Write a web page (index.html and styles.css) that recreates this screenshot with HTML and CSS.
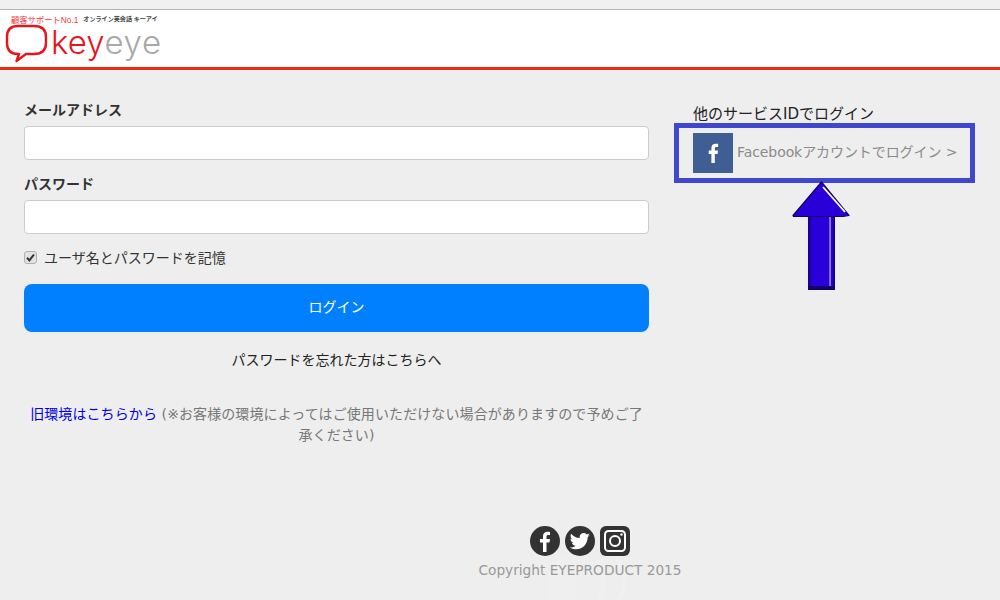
FILE: index.html
```html
<!DOCTYPE html>
<html lang="ja">
<head>
<meta charset="utf-8">
<title>Okeyeye ログイン</title>
<link rel="stylesheet" href="styles.css">
</head>
<body>
<div class="topstrip"></div>
<header class="header">
  <div class="logo">
    <div class="tagline"><span class="tag-red">顧客サポートNo.1</span><span class="tag-dark">オンライン英会話 キーアイ</span></div>
    <div class="wordmark">
      <svg class="bubble" width="44" height="40" viewBox="0 0 44 40" aria-hidden="true">
        <path d="M13 2H29C37 2 41 6 41 13V19C41 26 37 30 29 30H21L11.500 37L14 30H13C5.500 30 2 26 2 19V13C2 6 5.500 2 13 2Z" fill="none" stroke="#e8141c" stroke-width="2.400" stroke-linejoin="round"/>
      </svg>
      <span class="w-red">key</span><span class="w-gray">eye</span>
    </div>
  </div>
</header>
<main class="main">
  <section class="form">
    <label class="label">メールアドレス</label>
    <div class="input"></div>
    <label class="label">パスワード</label>
    <div class="input"></div>
    <div class="remember">
      <span class="check"><svg width="9" height="9" viewBox="0 0 9 9" aria-hidden="true"><path d="M1 4.800L3.400 7.400L8 1.500" fill="none" stroke="#333" stroke-width="2"/></svg></span>
      <span>ユーザ名とパスワードを記憶</span>
    </div>
    <div class="login">ログイン</div>
    <div class="forgot">パスワードを忘れた方はこちらへ</div>
    <p class="legacy"><span class="link">旧環境はこちらから</span> (※お客様の環境によってはご使用いただけない場合がありますので予めご了承ください)</p>
  </section>
  <aside class="side">
    <div class="side-title">他のサービスIDでログイン</div>
    <div class="fb-row">
      <span class="fb-icon">
        <svg width="40" height="40" viewBox="0 0 40 40" aria-hidden="true"><rect width="40" height="40" fill="#3f5f94"/><path d="M21.800 30V20.900H24.600L25 17.500H21.800V15.500C21.800 14.500 22.100 13.900 23.400 13.900H25.100V10.800C24.800 10.800 23.800 10.700 22.600 10.700C20.100 10.700 18.400 12.200 18.400 15V17.500H15.700V20.900H18.400V30Z" fill="#fff"/></svg>
      </span>
      <span class="fb-text">Facebookアカウントでログイン &gt;</span>
    </div>
  </aside>
</main>
<footer class="footer">
  <div class="social">
    <svg width="30" height="30" viewBox="0 0 30 30" aria-hidden="true"><circle cx="15" cy="15" r="15" fill="#333"/><path d="M16.500 26V16.500H19.500L20 13H16.500V10.700C16.500 9.600 16.900 9 18.200 9H20V5.900C19.600 5.800 18.600 5.700 17.500 5.700C14.900 5.700 13 7.300 13 10.300V13H10V16.500H13V26Z" fill="#fff"/></svg>
    <svg width="30" height="30" viewBox="0 0 30 30" aria-hidden="true"><circle cx="15" cy="15" r="15" fill="#333"/><path d="M25 9C24.200 9.400 23.400 9.600 22.600 9.700C23.500 9.200 24.100 8.400 24.400 7.400C23.600 7.900 22.700 8.200 21.700 8.400C20.900 7.600 19.900 7.100 18.700 7.100C16.400 7.100 14.600 9 14.600 11.200C14.600 11.500 14.600 11.800 14.700 12.100C11.300 11.900 8.200 10.300 6.200 7.800C5.800 8.400 5.600 9.100 5.600 9.900C5.600 11.300 6.300 12.600 7.400 13.300C6.700 13.300 6.100 13.100 5.500 12.800V12.900C5.500 14.900 6.900 16.500 8.800 16.900C8.200 17.100 7.500 17.100 6.900 17C7.400 18.600 8.900 19.800 10.700 19.800C9.300 20.900 7.500 21.600 5.600 21.600C5.300 21.600 5 21.600 4.700 21.500C6.500 22.700 8.700 23.300 11 23.300C18.600 23.300 22.700 17 22.700 11.600V11.100C23.600 10.500 24.400 9.800 25 9Z" fill="#fff"/></svg>
    <svg width="30" height="30" viewBox="0 0 30 30" aria-hidden="true"><rect width="30" height="30" rx="6" fill="#333"/><rect x="5" y="5" width="20" height="20" rx="3.500" fill="none" stroke="#fff" stroke-width="2"/><circle cx="15" cy="15" r="5" fill="none" stroke="#fff" stroke-width="2"/><circle cx="21.500" cy="8.500" r="1.300" fill="#fff"/></svg>
  </div>
  <div class="copyright">Copyright EYEPRODUCT 2015</div>
</footer>
<svg class="watermark" width="110" height="45" viewBox="0 0 110 45" aria-hidden="true">
  <path d="M24 45V14L38 0H52V45Z" fill="#efefef"/>
  <path d="M72 6Q84 24 74 45" fill="none" stroke="#f0f0f0" stroke-width="5"/>
  <path d="M90 0Q106 24 94 45" fill="none" stroke="#f0f0f0" stroke-width="5"/>
</svg>
<div class="highlight"></div>
<svg class="arrow" width="58" height="110" viewBox="0 0 58 110" aria-hidden="true">
  <defs>
    <linearGradient id="shaft" x1="0" x2="1" y1="0" y2="0">
      <stop offset="0" stop-color="#16007c"/>
      <stop offset="0.150" stop-color="#2a00d8"/>
      <stop offset="0.780" stop-color="#2a00d8"/>
      <stop offset="0.800" stop-color="#8f78f4"/>
      <stop offset="0.840" stop-color="#8f78f4"/>
      <stop offset="0.860" stop-color="#2a00d8"/>
      <stop offset="0.950" stop-color="#1f00a8"/>
      <stop offset="1" stop-color="#12005c"/>
    </linearGradient>
  </defs>
  <rect x="16" y="34" width="27" height="75" fill="url(#shaft)"/>
  <rect x="16" y="105" width="27" height="4" fill="#14006a"/>
  <path d="M29.500 1L57 34.500L51 35.500H1.500L1 34.500Z" fill="#2a00d8" stroke="#14006a" stroke-width="1.200" stroke-linejoin="round"/>
  <path d="M31 6L53 31" stroke="#fff" stroke-width="1.800"/>
</svg>
</body>
</html>
```
FILE: styles.css
```css
* { box-sizing: border-box; }
html, body { margin: 0; padding: 0; }
body {
  width: 1000px;
  height: 600px;
  overflow: hidden;
  position: relative;
  background: #eeeeee;
  font-family: "DejaVu Sans", "Noto Sans CJK JP", sans-serif;
  color: #333;
}
.topstrip { height: 10px; background: #f0f0f0; border-bottom: 1px solid #b4b4b4; }
.header { height: 60px; background: #fff; border-bottom: 3px solid #ee2a10; padding: 3px 0 0 5px; }
.logo { width: 160px; }
.tagline { display: flex; align-items: center; height: 11px; padding-left: 6px; white-space: nowrap; font-family: "Liberation Sans", "Noto Sans CJK JP", sans-serif; }
.tag-red { font-size: 8.300px; color: #f0343c; margin-right: 5px; }
.tag-dark { font-size: 6.100px; color: #444; font-weight: bold; }
.wordmark { display: flex; align-items: flex-start; height: 40px; }
.bubble { flex: none; }
.w-red, .w-gray {
  font-family: "Inter", sans-serif;
  font-weight: 300;
  font-size: 33px;
  line-height: 36px;
}
.w-red { color: #e8141c; margin-left: 2px; }
.w-gray { color: #a8a8a8; letter-spacing: 0.600px; }
.main { display: flex; padding: 0 24px; height: 456px; }
.form { width: 625px; padding-top: 30px; }
.label { display: block; font-size: 14px; font-weight: bold; line-height: 21px; color: #333; margin-bottom: 5px; }
.input { height: 34px; background: #fff; border: 1px solid #ccc; border-radius: 4px; margin-bottom: 14px; }
.remember { display: flex; align-items: center; height: 20px; margin-top: -1px; font-size: 14px; color: #333; }
.check { display: flex; align-items: center; justify-content: center; width: 13px; height: 13px; margin: 0 7px 0 0; background: #e2e2e2; border: 1px solid #b0b0b0; border-radius: 3px; }
.check svg { display: block; }
.login { height: 48px; margin-top: 17px; padding-bottom: 4px; background: #0080ff; color: #fff; border-radius: 8px; font-size: 14px; display: flex; align-items: center; justify-content: center; }
.forgot { margin-top: 18px; text-align: center; font-size: 14px; line-height: 20px; color: #222; }
.legacy { margin: 34px 0 0; padding: 0 5px; text-align: center; font-size: 14px; line-height: 21px; letter-spacing: 0.100px; color: #777; }
.link { color: #0000ee; }
.side { margin-left: 44px; padding-top: 33px; width: 255px; }
.side-title { font-size: 15px; line-height: 22px; color: #222; white-space: nowrap; }
.fb-row { display: flex; align-items: center; margin-top: 8px; height: 40px; }
.fb-icon { display: block; width: 40px; height: 40px; flex: none; }
.fb-icon svg { display: block; }
.fb-text { margin-left: 4px; font-size: 14px; line-height: 18px; margin-top: -2px; letter-spacing: -0.080px; color: #8a8a8a; white-space: nowrap; }
.footer { padding-left: 160px; text-align: center; }
.social { display: flex; justify-content: center; gap: 5px; height: 30px; }
.social svg { display: block; }
.copyright { margin-top: 5px; font-size: 13.700px; line-height: 18px; color: #999; }
.highlight { position: absolute; left: 674px; top: 123px; width: 301px; height: 60px; border: 5px solid #3f48cc; }
.arrow { position: absolute; left: 792px; top: 181px; }
.watermark { position: absolute; left: 525px; top: 555px; z-index: -1; }
```
